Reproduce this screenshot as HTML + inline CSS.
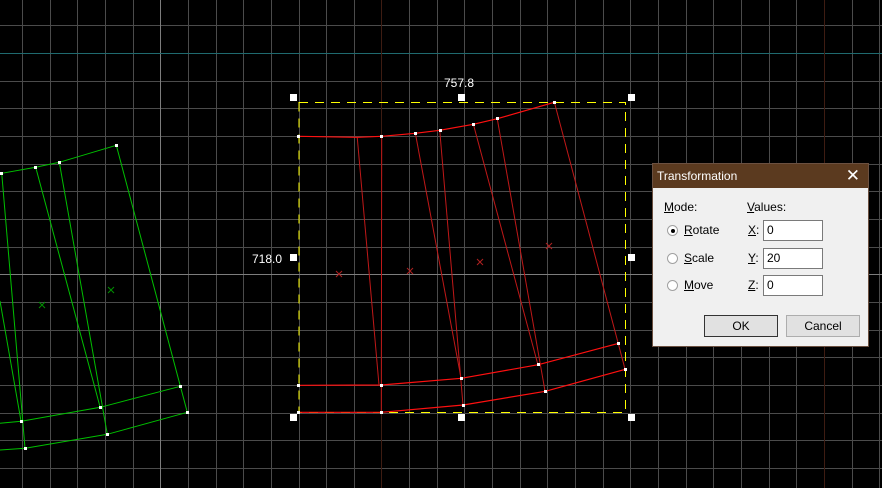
<!DOCTYPE html>
<html><head><meta charset="utf-8"><style>
html,body{margin:0;padding:0;background:#000;width:882px;height:488px;overflow:hidden;font-family:"Liberation Sans",sans-serif}
svg{position:absolute;left:0;top:0}
.dlg{position:absolute;left:652px;top:163px;width:217px;height:184px;background:#f0f0f0;border:1px solid #6b5040;box-sizing:border-box;font-size:12px;color:#000}
.tb{position:absolute;left:0;top:0;right:0;height:24px;background:#5b3a1f;color:#fff;font-size:12px}
.tb span{position:absolute;left:4px;top:5px}
.tb b{position:absolute;right:8px;top:2px;font-weight:normal;font-size:17px}
.t{position:absolute;white-space:nowrap}
.r{position:absolute;width:11px;height:11px;border-radius:50%;background:#fff;border:1px solid #a0a0a0;box-sizing:border-box}
.r i{position:absolute;left:3px;top:3px;width:4px;height:4px;border-radius:50%;background:#000}
.in{position:absolute;width:60px;height:21px;background:#fff;border:1px solid #7a7a7a;box-sizing:border-box;padding:2px 0 0 3px}
.bt{position:absolute;width:74px;height:22px;background:#e1e1e1;border:1px solid #adadad;box-sizing:border-box;text-align:center;line-height:20px}
</style></head><body>
<svg width="882" height="488" shape-rendering="crispEdges">
<g stroke="#4b4b4b" stroke-width="1">
<line x1="22.5" y1="0" x2="22.5" y2="488"/><line x1="50.5" y1="0" x2="50.5" y2="488"/><line x1="77.5" y1="0" x2="77.5" y2="488"/><line x1="105.5" y1="0" x2="105.5" y2="488"/><line x1="133.5" y1="0" x2="133.5" y2="488"/><line x1="188.5" y1="0" x2="188.5" y2="488"/><line x1="216.5" y1="0" x2="216.5" y2="488"/><line x1="243.5" y1="0" x2="243.5" y2="488"/><line x1="271.5" y1="0" x2="271.5" y2="488"/><line x1="299.5" y1="0" x2="299.5" y2="488"/><line x1="326.5" y1="0" x2="326.5" y2="488"/><line x1="354.5" y1="0" x2="354.5" y2="488"/><line x1="409.5" y1="0" x2="409.5" y2="488"/><line x1="437.5" y1="0" x2="437.5" y2="488"/><line x1="464.5" y1="0" x2="464.5" y2="488"/><line x1="492.5" y1="0" x2="492.5" y2="488"/><line x1="520.5" y1="0" x2="520.5" y2="488"/><line x1="547.5" y1="0" x2="547.5" y2="488"/><line x1="575.5" y1="0" x2="575.5" y2="488"/><line x1="603.5" y1="0" x2="603.5" y2="488"/><line x1="630.5" y1="0" x2="630.5" y2="488"/><line x1="658.5" y1="0" x2="658.5" y2="488"/><line x1="686.5" y1="0" x2="686.5" y2="488"/><line x1="713.5" y1="0" x2="713.5" y2="488"/><line x1="741.5" y1="0" x2="741.5" y2="488"/><line x1="769.5" y1="0" x2="769.5" y2="488"/><line x1="796.5" y1="0" x2="796.5" y2="488"/><line x1="852.5" y1="0" x2="852.5" y2="488"/><line x1="879.5" y1="0" x2="879.5" y2="488"/>
<line y1="25.5" x1="0" y2="25.5" x2="882"/><line y1="81.5" x1="0" y2="81.5" x2="882"/><line y1="108.5" x1="0" y2="108.5" x2="882"/><line y1="136.5" x1="0" y2="136.5" x2="882"/><line y1="164.5" x1="0" y2="164.5" x2="882"/><line y1="191.5" x1="0" y2="191.5" x2="882"/><line y1="219.5" x1="0" y2="219.5" x2="882"/><line y1="247.5" x1="0" y2="247.5" x2="882"/><line y1="302.5" x1="0" y2="302.5" x2="882"/><line y1="330.5" x1="0" y2="330.5" x2="882"/><line y1="357.5" x1="0" y2="357.5" x2="882"/><line y1="385.5" x1="0" y2="385.5" x2="882"/><line y1="413.5" x1="0" y2="413.5" x2="882"/><line y1="440.5" x1="0" y2="440.5" x2="882"/><line y1="468.5" x1="0" y2="468.5" x2="882"/>
</g>
<line x1="160.5" y1="0" x2="160.5" y2="488" stroke="#7d7d7d"/>
<line y1="274.5" x1="0" y2="274.5" x2="882" stroke="#7d7d7d"/>
<line y1="53.5" x1="0" y2="53.5" x2="882" stroke="#1f6a6f"/>
<line x1="381.5" y1="0" x2="381.5" y2="488" stroke="#3e1c12"/>
<line x1="824.5" y1="0" x2="824.5" y2="488" stroke="#3e1c12"/>
<g shape-rendering="auto" fill="none">
<rect x="299" y="102.5" width="326.5" height="310" stroke="#ffff00" stroke-dasharray="9,7"/>
<g stroke="#00c000" stroke-width="1">
<polyline points="0,174 1.7,173.3 35.7,167.3 59.3,162.3 116.3,145.3"/>
<polyline points="0,423.3 21.3,421.3 100.3,407.3 180.3,386.3"/>
<polyline points="0,450 25.3,448.3 107.3,434.3 187.3,412.3"/>
<line x1="1.7" y1="173" x2="25" y2="448"/><line x1="0" y1="301" x2="21" y2="421"/>
<line x1="35.7" y1="167.3" x2="100" y2="406.7"/><line x1="59.3" y1="162.3" x2="107.3" y2="434.3"/>
<line x1="116.3" y1="145.3" x2="187.3" y2="412.3"/>
<path d="M39,302 l6,6 M45,302 l-6,6 M108,287 l6,6 M114,287 l-6,6" stroke="#009000"/>
</g>
<g stroke="#ff1010" stroke-width="1.2">
<polyline points="298.7,136.3 357.3,137.3 381.7,136.3 415.3,133.3 439.7,130.3 473.3,124.3 497.3,118.7 554.3,102.3"/>
<polyline points="298.7,385.3 381.3,385 461.3,378.3 538.3,364.7 618.7,343.3"/>
<polyline points="298.7,412.3 381.3,412.3 463.3,405 545.3,391.3 625.3,369.3"/>
</g>
<g stroke="#c01818">
<line x1="357.3" y1="138" x2="379" y2="385"/><line x1="381.7" y1="136" x2="381.3" y2="412"/>
<line x1="415.3" y1="133" x2="461" y2="378"/><line x1="439.7" y1="130" x2="463" y2="405"/>
<line x1="473.3" y1="124" x2="538" y2="365"/><line x1="497.3" y1="119" x2="545" y2="391"/>
<line x1="554.3" y1="102" x2="625" y2="369"/>
<path d="M336,271 l6,6 M342,271 l-6,6 M407,268 l6,6 M413,268 l-6,6 M477,259 l6,6 M483,259 l-6,6 M546,243 l6,6 M552,243 l-6,6" stroke="#b02020"/>
</g>
</g>
<g fill="#fff">
<rect x="0" y="172" width="3" height="3"/><rect x="34" y="166" width="3" height="3"/><rect x="58" y="161" width="3" height="3"/><rect x="115" y="144" width="3" height="3"/>
<rect x="20" y="420" width="3" height="3"/><rect x="99" y="406" width="3" height="3"/><rect x="179" y="385" width="3" height="3"/>
<rect x="24" y="447" width="3" height="3"/><rect x="106" y="433" width="3" height="3"/><rect x="186" y="411" width="3" height="3"/>
<rect x="297" y="135" width="3" height="3"/><rect x="380" y="135" width="3" height="3"/><rect x="414" y="132" width="3" height="3"/><rect x="439" y="129" width="3" height="3"/><rect x="472" y="123" width="3" height="3"/><rect x="496" y="117" width="3" height="3"/><rect x="553" y="101" width="3" height="3"/>
<rect x="297" y="384" width="3" height="3"/><rect x="380" y="384" width="3" height="3"/><rect x="460" y="377" width="3" height="3"/><rect x="537" y="363" width="3" height="3"/><rect x="617" y="342" width="3" height="3"/>
<rect x="297" y="411" width="3" height="3"/><rect x="380" y="411" width="3" height="3"/><rect x="462" y="404" width="3" height="3"/><rect x="544" y="390" width="3" height="3"/><rect x="624" y="368" width="3" height="3"/>
<rect x="290" y="94" width="7" height="7"/><rect x="458" y="94" width="7" height="7"/><rect x="628" y="94" width="7" height="7"/>
<rect x="290" y="254" width="7" height="7"/><rect x="628" y="254" width="7" height="7"/>
<rect x="290" y="414" width="7" height="7"/><rect x="458" y="414" width="7" height="7"/><rect x="628" y="414" width="7" height="7"/>
</g>
<g fill="#fff" font-family="Liberation Sans, sans-serif" font-size="12" shape-rendering="auto">
<text x="444" y="87">757.8</text>
<text x="252" y="263">718.0</text>
</g>
</svg>
<div class="dlg">
<div class="tb"><span>Transformation</span><b>✕</b></div>
<div class="t" style="left:11px;top:36px"><u>M</u>ode:</div>
<div class="t" style="left:94px;top:36px"><u>V</u>alues:</div>
<div class="r" style="left:14px;top:61px"><i></i></div>
<div class="t" style="left:31px;top:59px"><u>R</u>otate</div>
<div class="r" style="left:14px;top:89px"></div>
<div class="t" style="left:31px;top:87px"><u>S</u>cale</div>
<div class="r" style="left:14px;top:116px"></div>
<div class="t" style="left:31px;top:114px"><u>M</u>ove</div>
<div class="t" style="left:95px;top:59px"><u>X</u>:</div>
<div class="t" style="left:95px;top:87px"><u>Y</u>:</div>
<div class="t" style="left:95px;top:114px"><u>Z</u>:</div>
<div class="in" style="left:110px;top:56px">0</div>
<div class="in" style="left:110px;top:84px">20</div>
<div class="in" style="left:110px;top:111px">0</div>
<div class="bt" style="left:51px;top:151px;border:1px solid #333">OK</div>
<div class="bt" style="left:133px;top:151px">Cancel</div>
</div>
</body></html>
